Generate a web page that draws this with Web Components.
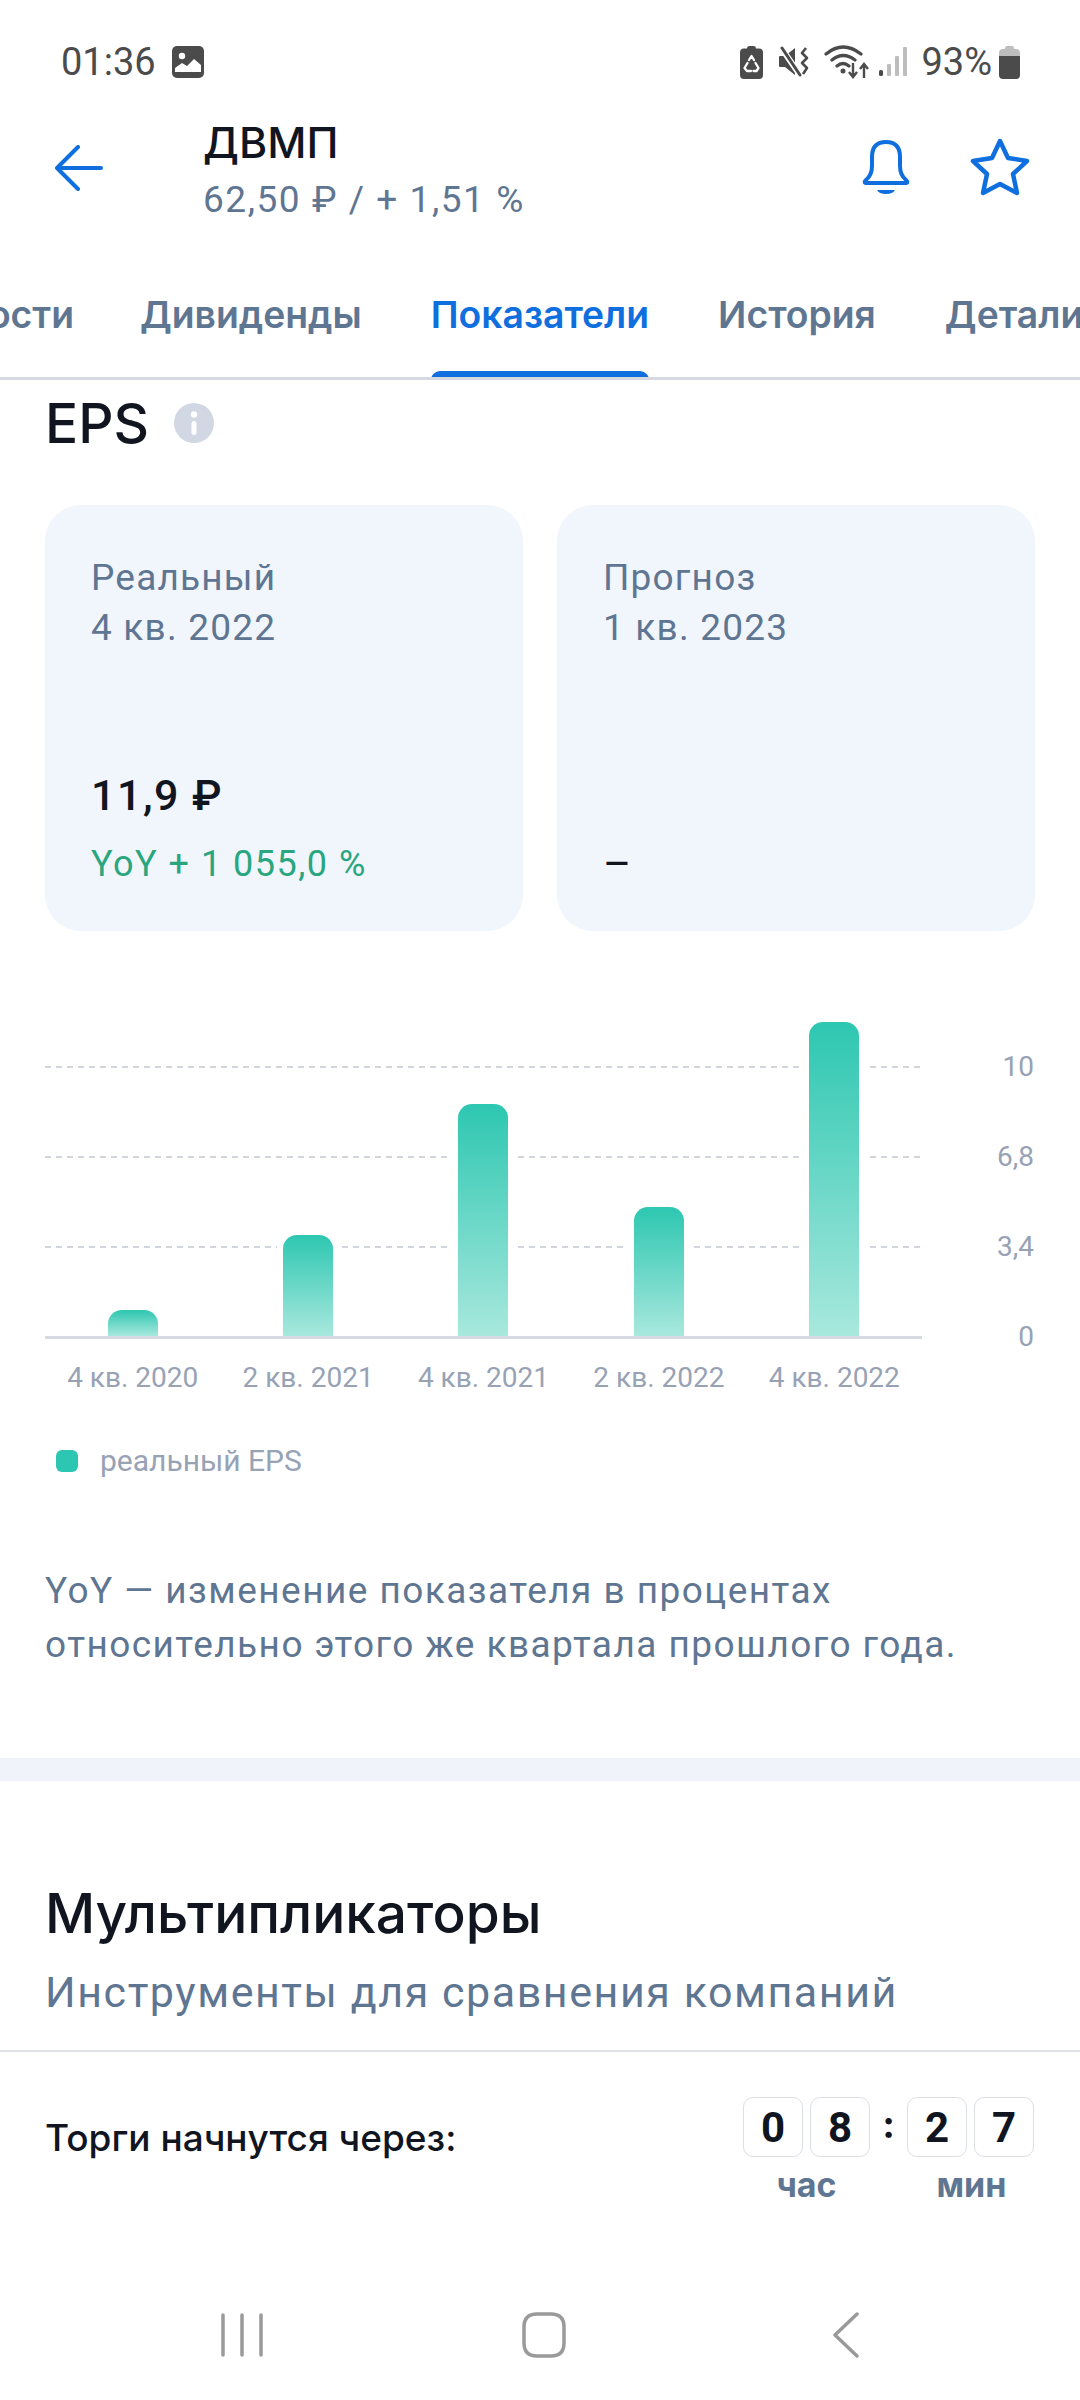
<!DOCTYPE html>
<html lang="ru">
<head>
<meta charset="utf-8">
<title>ДВМП</title>
<style>
  html, body { margin: 0; background: #fff; }
  body { width: 1080px; height: 2400px; overflow: hidden; font-family: Inter, "Noto Sans", sans-serif; color: #10151f; }
  #page { display: flex; flex-direction: column; height: 2400px; }
</style>
</head>
<body>
<div id="page">
  <status-bar></status-bar>
  <app-header title="ДВМП" price="62,50 ₽ / + 1,51 %"></app-header>
  <tab-strip></tab-strip>
  <eps-section>
    <metric-card label="Реальный" period="4 кв. 2022" value="11,9 ₽" delta="YoY + 1 055,0 %"></metric-card>
    <metric-card label="Прогноз" period="1 кв. 2023" dash></metric-card>
  </eps-section>
  <multi-section></multi-section>
  <timer-bar></timer-bar>
  <nav-bar></nav-bar>
</div>

<script>
function makeEl(name, html) {
  customElements.define(name, class extends HTMLElement {
    constructor() {
      super();
      this.attachShadow({ mode: 'open' });
      this.shadowRoot.innerHTML = typeof html === 'function' ? html(this) : html;
    }
  });
}

makeEl('status-bar', `
  <style>
    :host { display: flex; align-items: center; height: 100px; padding: 24px 60px 0 61px; box-sizing: border-box; color: #4b4b4b; font: 400 38px Roboto, sans-serif; flex: none; }
    .left, .right { display: flex; align-items: center; }
    .left { gap: 16px; flex: 1; }
    svg { display: block; }
    .pct { margin: 0 7px 0 14px; }
  </style>
  <div class="left">
    <span>01:36</span>
    <svg width="32" height="32" viewBox="0 0 32 32"><rect width="32" height="32" rx="5" fill="#4b4b4b"/><circle cx="10" cy="10" r="3.2" fill="#fff"/><path d="M3 26v-4l7-5 5 3 7-7 7 6v7z" fill="#fff"/></svg>
  </div>
  <div class="right">
    <svg width="23" height="33" viewBox="0 0 23 33"><path d="M7 2.500Q7 0 9 0h5q2 0 2 2.500h3q4 0 4 4V29q0 4-4 4H4q-4 0-4-4V6.500q0-4 4-4z" fill="#4b4b4b"/><path d="M9 14l2.500-4 2.500 4M7.500 17l-3 5 2.500 3h4M13.500 25h3l2-3-3-5" fill="none" stroke="#fff" stroke-width="2.300" stroke-linecap="round" stroke-linejoin="round"/></svg>
    <svg style="margin-left:16px" width="31" height="32" viewBox="0 0 31 32"><path d="M0 11q0-1 1-1h5l10-8v27l-10-8H1q-1 0-1-1z" fill="#4b4b4b"/><path d="M1 0l22 32" stroke="#fff" stroke-width="6"/><path d="M3 2l18 27" stroke="#4b4b4b" stroke-width="3" stroke-linecap="round"/><path d="M27 2l-4 5 5 5-5 5 5 5-4 6" fill="none" stroke="#4b4b4b" stroke-width="2.600" stroke-linejoin="round"/></svg>
    <svg style="margin-left:14px" width="46" height="34" viewBox="0 0 46 34"><path d="M2 9Q19-5 37 9M8 15Q19 6 31 15M13 21q6-5 12 0" fill="none" stroke="#4b4b4b" stroke-width="3.200" stroke-linecap="round"/><circle cx="19" cy="26" r="2.500" fill="#4b4b4b"/><path d="M29 18v13m-4-4 4 5 4-5M40 33V20m-4 4 4-5 4 5" fill="none" stroke="#4b4b4b" stroke-width="2.400"/></svg>
    <svg style="margin-left:9px" width="28" height="32" viewBox="0 0 28 32"><rect x="0" y="24" width="4" height="6" rx="1.500" fill="#4b4b4b"/><rect x="8" y="18" width="4" height="12" rx="1" fill="#bdbdbd"/><rect x="16" y="10" width="4" height="20" rx="1" fill="#bdbdbd"/><rect x="24" y="1" width="4" height="29" rx="1" fill="#bdbdbd"/></svg>
    <span class="pct">93%</span>
    <svg width="21" height="33" viewBox="0 0 21 33"><path d="M6 3Q6 0 8 0h5q2 0 2 3h2q4 0 4 4v3H0V7q0-4 4-4z" fill="#bdbdbd"/><path d="M0 10h21v19q0 4-4 4H4q-4 0-4-4z" fill="#4b4b4b"/></svg>
  </div>
`);

makeEl('app-header', el => `
  <style>
    :host { display: flex; align-items: flex-start; height: 150px; box-sizing: border-box; padding: 16px 50px 0 55px; flex: none; }
    .back { margin-top: 29px; margin-right: 100px; }
    .titles { flex: 1; }
    h1 { margin: 0; font: 500 43px/52px Inter, sans-serif; color: #10151f; }
    p { margin: 10px 0 0; font: 400 37px/44px Roboto, sans-serif; color: #5f7692; letter-spacing: 1.55px; }
    .acts { display: flex; gap: 60px; margin-top: 22px; }
    svg { display: block; }
  </style>
  <svg class="back" width="48" height="46" viewBox="0 0 48 46"><path d="M46 23H3M23 2 2 23l21 21" fill="none" stroke="#0f6fde" stroke-width="4" stroke-linecap="round" stroke-linejoin="round"/></svg>
  <div class="titles"><h1>${el.getAttribute('title')}</h1><p>${el.getAttribute('price')}</p></div>
  <div class="acts">
    <svg width="48" height="58" viewBox="0 0 48 58"><path d="M4 42Q10 37 10 28V19Q10 4 24 4T38 19V28Q38 37 44 42Q47 45 43 45H5Q1 45 4 42Z" fill="none" stroke="#0f6fde" stroke-width="4" stroke-linejoin="round"/><path d="M15 52h18q-2 4-9 4t-9-4z" fill="#0f6fde"/></svg>
    <svg width="60" height="58" viewBox="0 0 60 58"><path d="M30 3 38 20 57 23 43 36 47 55 30 46 13 55 17 36 3 23 22 20Z" fill="none" stroke="#0f6fde" stroke-width="4.500" stroke-linejoin="round"/></svg>
  </div>
`);

makeEl('tab-strip', `
  <style>
    :host { display: block; height: 130px; flex: none; overflow: hidden; border-bottom: 3px solid #d6d9e0; box-sizing: border-box; position: relative; }
    .row { display: flex; gap: 69px; margin-left: -84px; height: 100%; white-space: nowrap; font: 600 37.300px Inter, sans-serif; color: #5f7692; }
    .tab { display: flex; align-items: center; padding-top: 2px; box-sizing: border-box; position: relative; }
    .tab:first-child { margin-right: -3px; }
    .on { color: #0f6fde; }
    .on::after { content: ""; position: absolute; left: 0; right: 0; bottom: -3px; height: 9px; background: #0f6fde; border-radius: 9px 9px 0 0; }
  </style>
  <div class="row">
    <div class="tab">Новости</div>
    <div class="tab">Дивиденды</div>
    <div class="tab on">Показатели</div>
    <div class="tab">История</div>
    <div class="tab">Детали</div>
  </div>
`);

makeEl('metric-card', el => {
  const val = el.hasAttribute('dash')
    ? `<div class="val dash">–</div>`
    : `<div class="val">${el.getAttribute('value')}</div><div class="delta">${el.getAttribute('delta')}</div>`;
  return `
  <style>
    :host { display: flex; flex-direction: column; justify-content: space-between; width: 478px; height: 426px; box-sizing: border-box; padding: 48px 46px 44px; background: #f1f5fc; border-radius: 36px; }
    .lbl { font: 400 37px/50px Roboto, sans-serif; color: #5f7692; letter-spacing: 1.2px; }
    .val { font: 500 43px/50px Roboto, sans-serif; color: #10151f; letter-spacing: 1.500px; }
    .delta { margin-top: 21px; font: 400 36px/46px Roboto, sans-serif; color: #2aa67f; letter-spacing: 1.500px; }
    .dash { font-weight: 400; line-height: 46px; }
  </style>
  <div class="lbl">${el.getAttribute('label')}<br>${el.getAttribute('period')}</div>
  <div>${val}</div>`;
});

makeEl('bar-chart', () => {
  const bars = [26, 101, 232, 129, 314];
  const labels = ['4 кв. 2020', '2 кв. 2021', '4 кв. 2021', '2 кв. 2022', '4 кв. 2022'];
  return `
  <style>
    :host { display: block; width: 1080px; padding-top: 135px; position: relative; font: 400 28px Roboto, sans-serif; color: #98a2b5; }
    .line { height: 90px; width: 877px; margin-left: 45px; box-sizing: border-box; position: relative;
      background: repeating-linear-gradient(90deg, #d2d5dc 0 6px, transparent 6px 11px) top left / 100% 2px no-repeat; }
    .line span, .axis span { position: absolute; right: -112px; top: -17px; line-height: 36px; }
    .axis { height: 3px; width: 877px; margin-left: 45px; background: #d6d9e0; position: relative; z-index: 2; }
    .bars { position: absolute; left: 45px; bottom: 3px; display: grid; grid-template-columns: repeat(5, 1fr); width: 877px; align-items: end; justify-items: center; }
    .bar { width: 50px; border-radius: 14px 14px 0 0; background: linear-gradient(180deg, #2dc7b1, #a8e8dd); box-shadow: 0 0 0 6px #fff; }
    .names { display: grid; grid-template-columns: repeat(5, 1fr); width: 877px; margin: 21px 0 0 45px; text-align: center; line-height: 36px; white-space: nowrap; }
    .bars-wrap { position: relative; }
  </style>
  <div class="bars-wrap">
    <div class="line"><span>10</span></div>
    <div class="line"><span>6,8</span></div>
    <div class="line"><span>3,4</span></div>
    <div class="axis"><span>0</span></div>
    <div class="bars">${bars.map(h => `<div class="bar" style="height:${h}px"></div>`).join('')}</div>
  </div>
  <div class="names">${labels.map(l => `<div>${l}</div>`).join('')}</div>`;
});

makeEl('eps-section', `
  <style>
    :host { display: block; flex: none; height: 1401px; box-sizing: border-box; border-bottom: 23px solid #f0f4fa; }
    .head { display: flex; align-items: center; gap: 25px; height: 92px; padding: 0 0 0 45px; margin-top: -3px; box-sizing: border-box; }
    h2 { margin: 0; font: 500 55px Inter, sans-serif; color: #10151f; }
    .cards { display: flex; justify-content: space-between; margin: 36px 45px 0; }
    .legend { display: flex; align-items: center; gap: 22px; margin: 47px 0 0 56px; font: 400 30px Roboto, sans-serif; color: #98a2b5; }
    .legend i { width: 22px; height: 22px; border-radius: 6px; background: #2cc6b2; }
    .note { margin: 86px 45px 0; font: 400 37px/54px Roboto, sans-serif; color: #5f7692; letter-spacing: 1.450px; }
    svg { display: block; }
  </style>
  <div class="head"><h2>EPS</h2>
    <svg width="40" height="40" viewBox="0 0 40 40"><circle cx="20" cy="20" r="20" fill="#d2d8e3"/><circle cx="20" cy="11.500" r="3.200" fill="#fff"/><rect x="17.500" y="18" width="5" height="14" rx="2.500" fill="#fff"/></svg>
  </div>
  <div class="cards"><slot></slot></div>
  <bar-chart></bar-chart>
  <div class="legend"><i></i><span>реальный EPS</span></div>
  <div class="note">YoY — изменение показателя в процентах<br>относительно этого же квартала прошлого года.</div>
`);

makeEl('multi-section', `
  <style>
    :host { display: block; flex: none; height: 271px; box-sizing: border-box; padding: 102px 45px 0; border-bottom: 2px solid #dfe2e7; }
    h2 { margin: 0; font: 500 55px/60px Inter, sans-serif; color: #10151f; }
    p { margin: 24px 0 0; font: 400 43px/50px Roboto, sans-serif; color: #5f7692; letter-spacing: 1.550px; }
  </style>
  <h2>Мультипликаторы</h2>
  <p>Инструменты для сравнения компаний</p>
`);

makeEl('timer-bar', `
  <style>
    :host { display: flex; justify-content: space-between; align-items: flex-start; flex: none; height: 232px; box-sizing: border-box; padding: 45px 45px 0; }
    .txt { font: 500 37px/62px Inter, sans-serif; color: #10151f; margin-top: 10px; }
    .timer { display: flex; flex-direction: column; width: 292px; }
    .digits { display: flex; align-items: center; gap: 7px; }
    .d { width: 60px; height: 60px; box-sizing: border-box; border: 1.500px solid #dcdfe4; border-radius: 10px; display: flex; align-items: center; justify-content: center; font: 700 42px Roboto, sans-serif; color: #10151f; }
    .c { width: 23px; text-align: center; font: 700 38px Inter, sans-serif; color: #10151f; margin-top: -6px; }
    .units { display: flex; justify-content: space-between; padding-top: 6px; font: 700 34px/44px Inter, sans-serif; color: #5f7692; }
    .units span { width: 127px; text-align: center; }
  </style>
  <div class="txt">Торги начнутся через:</div>
  <div class="timer">
    <div class="digits"><div class="d">0</div><div class="d">8</div><div class="c">:</div><div class="d">2</div><div class="d">7</div></div>
    <div class="units"><span>час</span><span>мин</span></div>
  </div>
`);

makeEl('nav-bar', `
  <style>
    :host { display: flex; flex: 1; align-items: center; justify-content: space-between; padding: 0 220px 14px 220px; box-sizing: border-box; }
    svg { display: block; }
    .home { margin-right: 9px; }
  </style>
  <svg width="44" height="44" viewBox="0 0 44 44"><path d="M3 2v40M22 2v40M41 2v40" stroke="#9a9a9a" stroke-width="3.500" stroke-linecap="round"/></svg>
  <svg class="home" width="44" height="46" viewBox="0 0 44 46"><path d="M15 2h14q13 0 13 13v16q0 13-13 13H15Q2 44 2 31V15Q2 2 15 2Z" fill="none" stroke="#9a9a9a" stroke-width="3.500"/></svg>
  <svg width="28" height="46" viewBox="0 0 28 46"><path d="M25 2 3 23l22 21" fill="none" stroke="#9a9a9a" stroke-width="3.500" stroke-linecap="round" stroke-linejoin="round"/></svg>
`);
</script>
</body>
</html>
